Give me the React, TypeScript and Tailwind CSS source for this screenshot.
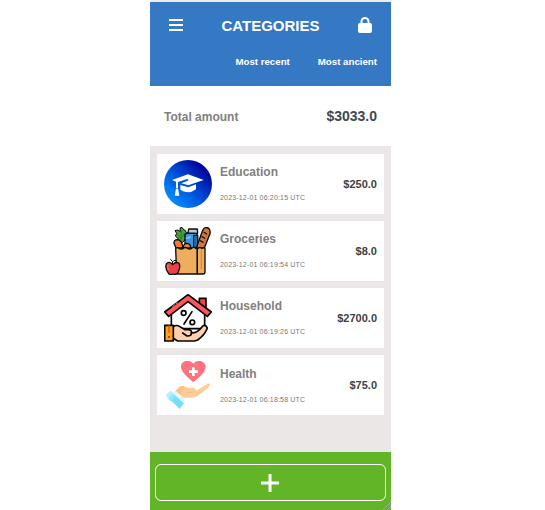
import React from 'react';

function EducationIcon() {
  return (
    <svg viewBox="42 36 144 144" className="block size-12">
      <defs>
        <linearGradient id="edu" x1="0.1" y1="0.9" x2="0.85" y2="0.15">
          <stop offset="0" stopColor="#0096ff" />
          <stop offset="0.5" stopColor="#0050dc" />
          <stop offset="1" stopColor="#000096" />
        </linearGradient>
      </defs>
      <circle cx="114" cy="108" r="72" fill="url(#edu)" />
      <path d="M66 96 L114 79 L161 96 L115 112 L94 106 L116 97 L112 93 L84 102 V121 L88 143 H74 L78 121 V101 Z" fill="#fff" />
      <path d="M91 111 L115 118 L138 109 V124 Q126 133 114 133 Q99 132 91 125 Z" fill="#fff" />
      <path d="M77 122 H85" stroke="#0064e0" strokeWidth="2" />
    </svg>
  );
}

function GroceriesIcon() {
  return (
    <svg viewBox="42 33 144 144" className="block size-12" stroke="#0b0b0b" strokeWidth="4" strokeLinejoin="round" strokeLinecap="round">
      <path d="M88 72 L76 60 L80 52 L75 44 L84 42 L91 47 L90 36 L96 34 L102 42 L106 43 L110 52 L105 61 L108 68 L98 79 Z" fill="#45a33b" strokeWidth="3" />
      <path d="M93 75 L94 45 M93 67 L83 54 M95 65 L103 53" stroke="#236b2b" strokeWidth="2" fill="none" />
      <path d="M72 82 Q71 71 82 71 Q96 72 99 96 H78 Z" fill="#f4792b" />
      <path d="M105 55 L114 50 L139 52 L143 58 V96 H105 Z" fill="#3e97dc" />
      <path d="M114 51 L116 39 H142 L143 52 Z" fill="#b6c9d4" />
      <path d="M132 58 H143 V94 H132 Z" fill="#226ca8" strokeWidth="3" />
      <path d="M109 67 L121 63" fill="none" stroke="#91c9f3" strokeWidth="4" />
      <path d="M139 96 L158 43 Q165 30 176 37 Q182 43 180 53 L163 96 Z" fill="#ce783b" />
      <path d="M162 49 L170 54 M156 62 L164 67 M151 74 L159 79" fill="none" strokeWidth="3.5" />
      <path d="M99 96 Q101 82 111 82 Q122 83 122 96 Z" fill="#f48a2e" />
      <path d="M77 98 Q82 92 87 97 Q94 101 100 97 Q106 92 112 97 Q119 101 125 97 Q131 91 137 97 L142 99 V174 H80 Z" fill="#efad60" />
      <path d="M142 99 Q149 92 155 97 Q161 94 165 96 V168 Q165 174 159 174 H142 Z" fill="#efad60" />
      <path d="M154 102 V158" fill="none" stroke="#c98539" strokeWidth="3" />
      <path d="M68 146 Q57 133 49 144 Q44 158 56 173 Q62 178 69 174 Q79 178 85 168 Q93 150 86 141 Q77 136 68 146 Z" fill="#e84343" />
      <path d="M68 146 Q70 135 62 130 M68 137 Q71 131 77 133" fill="none" strokeWidth="3" />
      <path d="M54 147 Q51 153 55 161" fill="none" stroke="#ff8178" strokeWidth="3" />
    </svg>
  );
}

function HouseholdIcon() {
  return (
    <svg viewBox="42 30 144 144" className="block size-12" stroke="#050505" strokeWidth="5" strokeLinejoin="round" strokeLinecap="round">
      <path d="M64 80 L114 43 L164 81 V134 H64 Z" fill="#fff" />
      <path d="M148 60 V43 H168 V76 Z" fill="#ef4447" />
      <path d="M44 84 L114 32 L184 84 L172 97 L114 53 L56 97 Z" fill="#ff565b" />
      <circle cx="101" cy="87" r="7" fill="#fff" />
      <circle cx="127" cy="115" r="7" fill="#fff" />
      <path d="M126 83 L102 120" fill="none" />
      <path d="M69 128 Q79 121 90 128 L105 137 H117 Q127 140 124 147 Q142 148 159 125 Q168 122 172 132 Q166 151 143 168 L134 171 H83 L69 162 Z" fill="#ffd0ad" />
      <path d="M98 147 L111 156 Q125 157 124 147" fill="none" />
      <path d="M44 124 H70 V171 H44 Z" fill="#ff9f20" />
      <path d="M57 126 V145" stroke="#bd6715" strokeWidth="4" />
      <path d="M57 158 V159" strokeWidth="4" />
      <path d="M68 68 L73 63 M78 59 L81 57" stroke="#fff" strokeWidth="2" />
    </svg>
  );
}

function HealthIcon() {
  return (
    <svg viewBox="42 33 144 144" className="block size-12">
      <path d="M130 97 C115 83 94 68 93 51 C92 31 119 26 130 41 C143 25 168 34 167 52 C166 69 145 84 130 97 Z" fill="#ff7280" />
      <path d="M126 52 H134 V61 H143 V69 H134 V78 H126 V69 H117 V61 H126 Z" fill="#fff" />
      <path d="M76 124 L89 110 Q97 106 105 110 L116 114 H132 Q139 117 137 123 L167 105 Q177 98 181 102 Q180 109 171 116 L145 136 Q139 142 129 143 H107 L95 145 Z" fill="#ffcb96" />
      <path d="M108 126 H129 Q140 125 137 117 Q138 132 108 126 Z" fill="#f5ae6f" />
      <path d="M76 124 L89 110 Q97 106 105 110 L95 123 L91 144 Z" fill="#ffbf85" />
      <path d="M62 123 L102 160 L89 177 L48 136 Z" fill="#76dcf7" />
      <path d="M62 123 L70 130 L55 147 L48 136 Z" fill="#b2efff" />
      <path d="M70 130 L78 137 L64 155 L55 147 Z" fill="#8ce9fd" />
      <path d="M76 121 L104 147 L98 156 L68 129 Z" fill="#dff7fc" />
    </svg>
  );
}

const categories = [
  { name: 'Education', date: '2023-12-01 06:20:15 UTC', amount: '$250.0', Icon: EducationIcon, inset: 'pt-[11px]' },
  { name: 'Groceries', date: '2023-12-01 06:19:54 UTC', amount: '$8.0', Icon: GroceriesIcon, inset: 'pt-[11px]' },
  { name: 'Household', date: '2023-12-01 06:19:26 UTC', amount: '$2700.0', Icon: HouseholdIcon, inset: 'pt-[11px]' },
  { name: 'Health', date: '2023-12-01 06:18:58 UTC', amount: '$75.0', Icon: HealthIcon, inset: 'pt-3' },
];

export default function App() {
  return (
    <div className="h-[510px] w-[545px] overflow-hidden bg-white pl-[150px] font-['Liberation_Sans',Arial,sans-serif]">
      <main className="relative flex h-full w-[241px] flex-col border-t-2 border-[#eeeeee] bg-[#ebe7e6]">
        <header className="h-[84px] shrink-0 bg-[#3578c3] text-white">
          <div className="flex h-[46px] items-center justify-between px-[19px]">
            <button aria-label="Menu" className="flex h-3 w-3.5 flex-col justify-between">
              <span className="h-0.5 w-full bg-white" />
              <span className="h-0.5 w-full bg-white" />
              <span className="h-0.5 w-full bg-white" />
            </button>
            <h1 className="pt-px text-[15px] font-bold leading-5">CATEGORIES</h1>
            <svg viewBox="0 0 448 512" className="h-4 w-3.5" fill="currentColor">
              <path d="M144 144v48h160v-48a80 80 0 0 0-160 0zm-64 48v-48a144 144 0 0 1 288 0v48h16a64 64 0 0 1 64 64v192a64 64 0 0 1-64 64H64a64 64 0 0 1-64-64V256a64 64 0 0 1 64-64z" />
            </svg>
          </div>
          <nav className="flex justify-end gap-7 pr-[14px] pt-[7px] text-[9.7px] font-bold leading-[14px]">
            <span>Most recent</span>
            <span>Most ancient</span>
          </nav>
        </header>
        <section className="flex h-[60px] shrink-0 items-center justify-between bg-white px-[14px] font-bold">
          <span className="pt-0.5 text-xs text-[#808080]">Total amount</span>
          <span className="text-[14px] text-[#414850]">$3033.0</span>
        </section>
        <section className="flex flex-col gap-[7px] px-[7px] pt-2">
          {categories.map(({ name, date, amount, Icon, inset }) => (
            <article key={name} className="flex h-[60px] items-center bg-white px-[7px]">
              <Icon />
              <div className={`h-full flex-1 pl-2 ${inset}`}>
                <h2 className="text-xs font-bold leading-[14px] text-[#808080]">{name}</h2>
                <p className="mt-3.5 whitespace-nowrap text-[7px] leading-[10px] tracking-[0.17px] text-[#777]">{date}</p>
              </div>
              <span className="text-[11px] font-bold text-[#414141]">{amount}</span>
            </article>
          ))}
        </section>
        <footer className="mt-auto h-[58px] shrink-0 bg-[#61b526] px-[5px] pt-3">
          <button aria-label="Add category" className="flex h-[37px] w-full items-center justify-center rounded-[6px] border border-white pr-px">
            <svg viewBox="0 0 18 18" className="size-[18px]" fill="none" stroke="#fff" strokeWidth="3">
              <path d="M9 0V18M0 9H18" />
            </svg>
          </button>
        </footer>
        <svg viewBox="0 0 8 8" className="absolute bottom-0 right-0 size-2" stroke="#a8a4ac" strokeWidth="1">
          <path d="M0 8L8 0M4 8L8 4" />
        </svg>
      </main>
    </div>
  );
}
